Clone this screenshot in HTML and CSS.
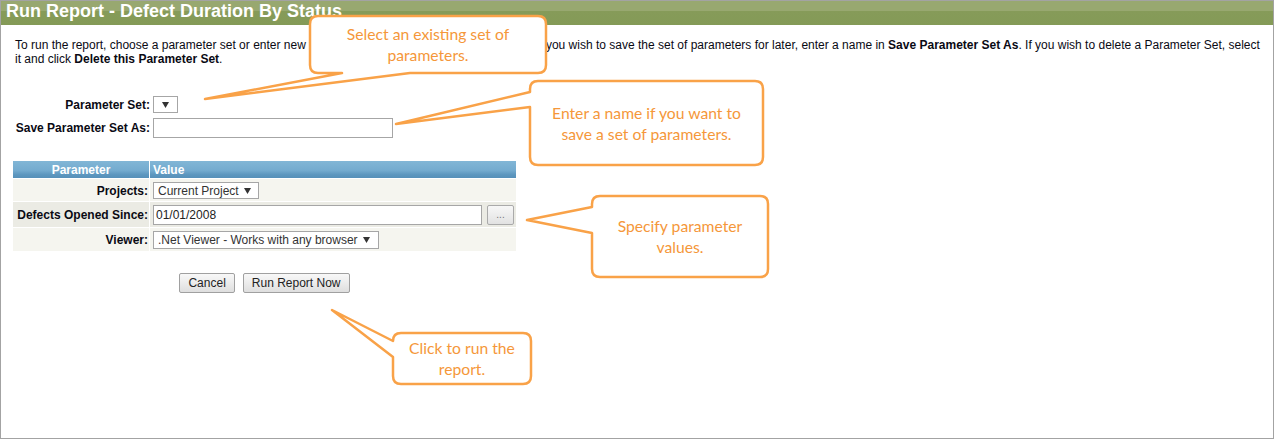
FILE: index.html
```html
<!DOCTYPE html>
<html>
<head>
<meta charset="utf-8">
<title>Run Report - Defect Duration By Status</title>
<link rel="stylesheet" href="styles.css">
</head>
<body>
<div class="frame">
  <div class="titlebar"><h1>Run Report - Defect Duration By Status</h1></div>
  <div class="content">
    <p class="intro">To run the report, choose a parameter set or enter new values, and then select <b>Run Report Now</b>. If you wish to save the set of parameters for later, enter a name in <b>Save Parameter Set As</b>. If you wish to delete a Parameter Set, select it and click <b>Delete this Parameter Set</b>.</p>

    <div class="paramset">
      <span class="label">Parameter Set:</span>
      <span class="control select tiny"><svg class="caret" width="7" height="6" viewBox="0 0 7 6"><path d="M0 0H7L3.5 6Z"/></svg></span>
      <span class="label">Save Parameter Set As:</span>
      <span class="control textbox wide"></span>
    </div>

    <table class="params">
      <thead>
        <tr><th class="pcol">Parameter</th><th class="vcol">Value</th></tr>
      </thead>
      <tbody>
        <tr class="odd">
          <td class="pcol">Projects:</td>
          <td class="vcol"><span class="control select projects">Current Project <svg class="caret" width="7" height="6" viewBox="0 0 7 6"><path d="M0 0H7L3.5 6Z"/></svg></span></td>
        </tr>
        <tr class="even">
          <td class="pcol">Defects Opened Since:</td>
          <td class="vcol"><div class="daterow"><span class="control textbox date">01/01/2008</span><span class="dots">...</span></div></td>
        </tr>
        <tr class="odd">
          <td class="pcol">Viewer:</td>
          <td class="vcol"><span class="control select viewer">.Net Viewer - Works with any browser <svg class="caret" width="7" height="6" viewBox="0 0 7 6"><path d="M0 0H7L3.5 6Z"/></svg></span></td>
        </tr>
      </tbody>
    </table>

    <div class="actions">
      <span class="btn">Cancel</span>
      <span class="btn">Run Report Now</span>
    </div>
  </div>
</div>

<div class="callouts">
  <svg class="bubbles" width="1274" height="439" viewBox="0 0 1274 439">
    <path d="M318,16 H538 Q546,16 546,24 V65 Q546,73 538,73 H410 L205,99 L342,73 H318 Q310,73 310,65 V24 Q310,16 318,16 Z"/>
    <path d="M538,81 H755 Q763,81 763,89 V157 Q763,165 755,165 H538 Q530,165 530,157 V107 L396,124 L530,92 V89 Q530,81 538,81 Z"/>
    <path d="M600,196 H760 Q768,196 768,204 V269 Q768,277 760,277 H600 Q592,277 592,269 V233 L527,220 L592,207 V204 Q592,196 600,196 Z"/>
    <path d="M401,333 H523 Q531,333 531,341 V376 Q531,384 523,384 H401 Q393,384 393,376 V357 L332,310 L393,341 Q393,333 401,333 Z"/>
  </svg>
  <div class="note n1">Select an existing set of<br>parameters.</div>
  <div class="note n2">Enter a name if you want to<br>save a set of parameters.</div>
  <div class="note n3">Specify parameter<br>values.</div>
  <div class="note n4">Click to run the<br>report.</div>
</div>
</body>
</html>
```

FILE: styles.css
```css
html, body {
  margin: 0;
  padding: 0;
  background: #ffffff;
}

body {
  position: relative;
  width: 1274px;
  height: 439px;
  overflow: hidden;
  font-family: "Liberation Sans", Arial, sans-serif;
  font-size: 12px;
  color: #000;
}

.frame {
  box-sizing: border-box;
  width: 1274px;
  height: 439px;
  border: 1px solid #a3a3a3;
  background: #fff;
}

.titlebar {
  height: 24px;
  background: linear-gradient(to bottom, #98a870 0, #98a870 40%, #869b59 42%, #849a57 100%);
  padding: 0 5px;
  overflow: visible;
}

.titlebar h1 {
  margin: 0;
  font-size: 18px;
  line-height: 20px;
  font-weight: bold;
  color: #fff;
  white-space: nowrap;
}

.content {
  padding: 0 8px 0 12px;
}

.intro {
  margin: 13px 0 0 2px;
  line-height: 14px;
  color: #0a0a14;
}

.paramset {
  margin: 30px 0 0 2px;
  display: grid;
  grid-template-columns: 135px auto;
  column-gap: 3px;
  row-gap: 5px;
  align-items: center;
  justify-items: start;
}

.paramset .label {
  justify-self: end;
  font-weight: bold;
  line-height: 14px;
  color: #0a0a14;
}

.control {
  box-sizing: border-box;
  display: inline-flex;
  align-items: center;
  background: #fff;
  border: 1px solid #a6a6a6;
  color: #333;
  font-size: 12px;
  white-space: nowrap;
}

.caret {
  fill: #333;
  margin-left: 5px;
}

.select.tiny {
  width: 25px;
  height: 17px;
  justify-content: center;
}

.select.tiny .caret {
  margin-left: 0;
}

.textbox.wide {
  width: 240px;
  height: 20px;
}

.params {
  margin-top: 23px;
  width: 503px;
  border-collapse: separate;
  border-spacing: 0;
}

.params th {
  height: 17px;
  padding: 0;
  background: linear-gradient(to bottom, #82b6d6 0, #74abcf 55%, #5d97bf 80%, #5690b9 100%);
  color: #fff;
  font-weight: bold;
  font-size: 12px;
  line-height: 14px;
}

.params th.pcol {
  text-align: center;
  border-right: 1px solid #fff;
}

.params th.vcol {
  text-align: left;
  padding-left: 3px;
}

.params .pcol {
  width: 135px;
}

.params td {
  border-top: 1px solid #fff;
  padding: 3px 0 2px 0;
  vertical-align: middle;
  line-height: 14px;
}

.params td.pcol {
  text-align: right;
  font-weight: bold;
  padding-right: 1px;
  border-right: 1px solid #fff;
  color: #0a0a14;
}

.params td.vcol {
  padding-left: 3px;
}

.params tr.odd td {
  background: #f5f5ef;
}

.params tr.even td {
  background: #ebebe4;
}

.select.projects {
  width: 106px;
  height: 17px;
  padding-left: 4px;
}

.select.viewer {
  width: 226px;
  height: 18px;
  padding-left: 4px;
}

.daterow {
  display: flex;
  align-items: center;
  gap: 5px;
}

.textbox.date {
  width: 329px;
  height: 20px;
  padding-left: 2px;
  color: #222;
}

.dots {
  box-sizing: border-box;
  width: 27px;
  height: 20px;
  display: inline-flex;
  align-items: center;
  justify-content: center;
  border: 1px solid #aaa;
  border-radius: 2px;
  background: linear-gradient(to bottom, #f7f7f7, #e2e2e2);
  color: #777;
  font-size: 10px;
}

.actions {
  width: 503px;
  margin-top: 22px;
  display: flex;
  justify-content: center;
  gap: 8px;
}

.btn {
  box-sizing: border-box;
  height: 20px;
  padding: 0 8px;
  display: inline-flex;
  align-items: center;
  border: 1px solid #a0a0a0;
  border-radius: 2px;
  background: linear-gradient(to bottom, #f8f8f8 0, #ececec 50%, #dedede 100%);
  color: #222;
  font-size: 12px;
}

/* Annotation callouts overlaying the screenshot */
.callouts {
  position: absolute;
  top: 0;
  left: 0;
  width: 1274px;
  height: 439px;
  pointer-events: none;
}

.bubbles {
  position: absolute;
  top: 0;
  left: 0;
}

.bubbles path {
  fill: #fff;
  stroke: #f9a248;
  stroke-width: 2.5;
  stroke-linejoin: round;
}

.note {
  position: absolute;
  display: flex;
  align-items: center;
  justify-content: center;
  text-align: center;
  font-family: Lato, "Open Sans", sans-serif;
  font-size: 15.7px;
  line-height: 21px;
  color: #f5973a;
  white-space: nowrap;
}

.n1 { left: 310px; top: 16px; width: 236px; height: 58px; }
.n2 { left: 530px; top: 81px; width: 233px; height: 85px; }
.n3 { left: 592px; top: 196px; width: 176px; height: 82px; }
.n4 { left: 393px; top: 333px; width: 138px; height: 52px; }
```
